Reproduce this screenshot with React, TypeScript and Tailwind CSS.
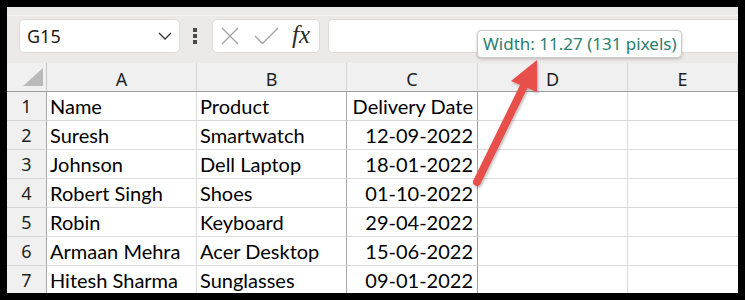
import React from "react";

const cellFont = { fontFamily: "Lato, 'Liberation Sans', sans-serif" };
const uiFont = { fontFamily: "'Noto Sans', 'Open Sans', sans-serif" };

const rows: [string, string, string, string][] = [
  ["1", "Name", "Product", "Delivery Date"],
  ["2", "Suresh", "Smartwatch", "12-09-2022"],
  ["3", "Johnson", "Dell Laptop", "18-01-2022"],
  ["4", "Robert Singh", "Shoes", "01-10-2022"],
  ["5", "Robin", "Keyboard", "29-04-2022"],
  ["6", "Armaan Mehra", "Acer Desktop", "15-06-2022"],
  ["7", "Hitesh Sharma", "Sunglasses", "09-01-2022"],
];

export default function App() {
  return (
    <div className="relative w-[745px] h-[300px] bg-black p-[7px] overflow-hidden">
      <div className="w-full h-full bg-white flex flex-col overflow-hidden">
        {/* Toolbar */}
        <div className="relative h-[56px] shrink-0 bg-[#ede9e9] flex items-start pt-[12px] pl-[12px]">
          <div className="absolute left-0 right-0 top-[8px] h-px bg-[#f5f3f3]" />
          <div className="relative w-[161px] h-[34px] bg-white rounded-[5px] border border-[#dedada] flex items-center pl-[7px] pr-[7px] justify-between">
            <span style={uiFont} className="text-[18px] leading-[24px] text-[#1a1a1a]">G15</span>
            <svg width="14" height="8" viewBox="0 0 14 8" className="mr-[0px]">
              <path d="M1 1 L7 7 L13 1" fill="none" stroke="#333" strokeWidth="1.3" />
            </svg>
          </div>
          <div className="ml-[13px] mt-[9px] flex flex-col gap-[2px]">
            <div className="w-[4px] h-[4px] bg-[#4a4a4a]" />
            <div className="w-[4px] h-[4px] bg-[#4a4a4a]" />
            <div className="w-[4px] h-[4px] bg-[#4a4a4a]" />
          </div>
          <div className="relative ml-[15px] w-[108px] h-[34px] bg-white rounded-[5px] border border-[#dedada] flex items-center pl-[8px]">
            <svg width="18" height="18" viewBox="0 0 18 18">
              <path d="M1 1 L17 17 M17 1 L1 17" stroke="#a6a6a6" strokeWidth="1.4" fill="none" />
            </svg>
            <svg width="25" height="18" viewBox="0 0 25 18" className="ml-[15px]">
              <path d="M1 9 L8.5 16.5 L24 1" stroke="#a6a6a6" strokeWidth="1.4" fill="none" />
            </svg>
            <span
              className="ml-[13px] text-[25px] leading-[24px] italic text-[#2b2b2b] -mt-[3px]"
              style={{ fontFamily: "'Liberation Serif', 'DejaVu Serif', serif" }}
            >
              fx
            </span>
          </div>
          <div className="ml-[8px] flex-1 h-[34px] bg-white rounded-l-[5px] border border-r-0 border-[#dedada]" />
        </div>

        {/* Column header */}
        <div className="flex h-[29px] shrink-0 bg-[#f0f0f0] border-b border-[#9e9e9e]" style={uiFont}>
          <div className="w-[40px] shrink-0 border-r border-[#c8c8c8] relative">
            <svg width="21" height="19" viewBox="0 0 21 19" className="absolute left-[16px] top-[5px]">
              <polygon points="0,18 20,0 20,18" fill="#b9b9b9" />
            </svg>
          </div>
          {[
            ["A", "w-[150px]"],
            ["B", "w-[150px]"],
            ["C", "w-[131px]"],
            ["D", "w-[150px]"],
            ["E", "flex-1"],
          ].map(([l, w]) => (
            <div
              key={l}
              className={`${w} shrink-0 border-r border-[#d5d5d5] flex items-center justify-center pt-[4px] text-[18px] leading-[24px] text-[#1f1f1f]`}
            >
              {l}
            </div>
          ))}
        </div>

        {/* Data rows */}
        {rows.map(([n, a, b, c]) => (
          <div key={n} className="flex h-[29px] shrink-0">
            <div
              style={uiFont}
              className="w-[40px] shrink-0 bg-[#f0f0f0] border-r border-b border-r-[#a8a8a8] border-b-[#d6d6d6] flex items-center justify-center text-[18px] leading-[24px] text-[#1f1f1f]"
            >
              {n}
            </div>
            <div
              style={cellFont}
              className="w-[150px] shrink-0 border-r border-b border-[#dadada] flex items-center pl-[3px] text-[20px] leading-[24px] text-black whitespace-nowrap"
            >
              {a}
            </div>
            <div
              style={cellFont}
              className="w-[150px] shrink-0 border-r border-b border-r-[#a9a9a9] border-b-[#dadada] flex items-center pl-[3px] text-[20px] leading-[24px] text-black whitespace-nowrap"
            >
              {b}
            </div>
            <div
              style={cellFont}
              className="w-[131px] shrink-0 border-r border-b border-r-[#a0a0a0] border-b-[#dadada] flex items-center justify-end pr-[4px] text-[20px] leading-[24px] text-black whitespace-nowrap"
            >
              {c}
            </div>
            <div className="w-[150px] shrink-0 border-r border-b border-[#dadada]" />
            <div className="flex-1 border-b border-[#dadada]" />
          </div>
        ))}
      </div>

      {/* Width tooltip */}
      <div
        style={uiFont}
        className="absolute left-[477px] top-[30px] w-[205px] h-[28px] bg-white border border-[#c9c9c9] rounded-[4px] shadow-[0_1px_3px_rgba(0,0,0,0.2)] flex items-center pl-[5px] text-[17px] leading-[22px] text-[#2a7f6f] whitespace-nowrap"
      >
        Width: 11.27 (131 pixels)
      </div>

      {/* Red arrow */}
      <svg className="absolute left-0 top-0 pointer-events-none" width="745" height="300" viewBox="0 0 745 300">
        <defs>
          <filter id="sh" x="-20%" y="-20%" width="140%" height="140%">
            <feDropShadow dx="1" dy="1.5" stdDeviation="1.5" floodColor="#000" floodOpacity="0.3" />
          </filter>
        </defs>
        <g filter="url(#sh)">
          <line x1="477" y1="182" x2="525" y2="84" stroke="#e8504b" strokeWidth="8" strokeLinecap="round" />
          <polygon points="537,60 511,81 537,92" fill="#e8504b" />
        </g>
      </svg>
    </div>
  );
}
